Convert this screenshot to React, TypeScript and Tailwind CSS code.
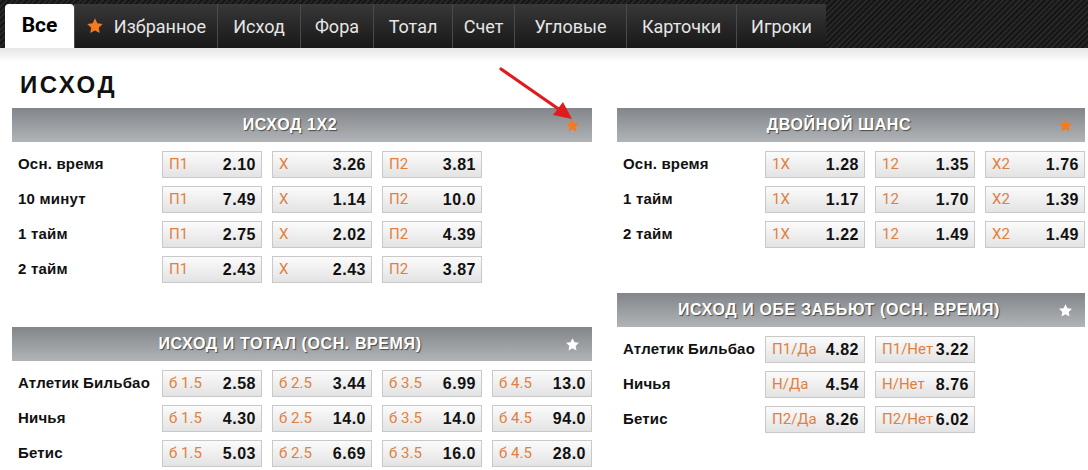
import type { ReactNode } from 'react';

type Odd = { label: string; value: string };
type Row = { name: string; odds: Odd[] };

const TABS: { title: string; width: string }[] = [
  { title: 'Исход', width: 'w-[83px]' },
  { title: 'Фора', width: 'w-[73px]' },
  { title: 'Тотал', width: 'w-[79px]' },
  { title: 'Счет', width: 'w-[62px]' },
  { title: 'Угловые', width: 'w-[112px]' },
  { title: 'Карточки', width: 'w-[110px]' },
  { title: 'Игроки', width: 'w-[90px]' }
];

const mk = (labels: string[], values: string[]): Odd[] =>
  labels.map((label, i) => ({ label, value: values[i] }));

const outcome: Row[] = [
  { name: 'Осн. время', odds: mk(['П1', 'Х', 'П2'], ['2.10', '3.26', '3.81']) },
  { name: '10 минут', odds: mk(['П1', 'Х', 'П2'], ['7.49', '1.14', '10.0']) },
  { name: '1 тайм', odds: mk(['П1', 'Х', 'П2'], ['2.75', '2.02', '4.39']) },
  { name: '2 тайм', odds: mk(['П1', 'Х', 'П2'], ['2.43', '2.43', '3.87']) }
];

const totals = ['б 1.5', 'б 2.5', 'б 3.5', 'б 4.5'];
const outcomeTotal: Row[] = [
  { name: 'Атлетик Бильбао', odds: mk(totals, ['2.58', '3.44', '6.99', '13.0']) },
  { name: 'Ничья', odds: mk(totals, ['4.30', '14.0', '14.0', '94.0']) },
  { name: 'Бетис', odds: mk(totals, ['5.03', '6.69', '16.0', '28.0']) }
];

const doubleChance: Row[] = [
  { name: 'Осн. время', odds: mk(['1X', '12', 'X2'], ['1.28', '1.35', '1.76']) },
  { name: '1 тайм', odds: mk(['1X', '12', 'X2'], ['1.17', '1.70', '1.39']) },
  { name: '2 тайм', odds: mk(['1X', '12', 'X2'], ['1.22', '1.49', '1.49']) }
];

const bothScore: Row[] = [
  { name: 'Атлетик Бильбао', odds: mk(['П1/Да', 'П1/Нет'], ['4.82', '3.22']) },
  { name: 'Ничья', odds: mk(['Н/Да', 'Н/Нет'], ['4.54', '8.76']) },
  { name: 'Бетис', odds: mk(['П2/Да', 'П2/Нет'], ['8.26', '6.02']) }
];

function Star({ className }: { className: string }) {
  return (
    <svg viewBox="0 0 24 24" className={className} fill="currentColor">
      <path d="M12 1.8l3.1 6.6 7.2.9-5.3 5 1.4 7.1L12 17.9l-6.4 3.5 1.4-7.1-5.3-5 7.2-.9z" />
    </svg>
  );
}

function SectionHeader({ title, starred }: { title: string; starred: boolean }) {
  return (
    <div className="relative h-[34px] flex items-center justify-center pr-[24px] bg-gradient-to-b from-[#82868a] to-[#b1b4b7]">
      <span className="text-white font-bold text-[16px] tracking-[0.6px] uppercase font-['Liberation_Sans',Arial,sans-serif] [text-shadow:1px_1px_1px_rgba(0,0,0,0.55)]">
        {title}
      </span>
      <Star
        className={`absolute right-[12px] top-[10px] w-[15px] h-[15px] ${
          starred ? 'text-[#f47a20]' : 'text-white'
        }`}
      />
    </div>
  );
}

function OddCell({ odd }: { odd: Odd }) {
  return (
    <div className="w-[100px] h-[27px] flex items-center justify-between px-[5px] whitespace-nowrap border border-[#c9c9c9] bg-gradient-to-b from-[#fbfbfb] to-[#e3e3e3]">
      <span className="text-[#e0803f] text-[15px] font-['Roboto',sans-serif] pl-[1px]">
        {odd.label}
      </span>
      <span className="text-[#111] font-bold text-[16px] tracking-[0.5px] font-['Liberation_Sans',Arial,sans-serif]">
        {odd.value}
      </span>
    </div>
  );
}

function Section({
  title,
  starred,
  rows,
  labelWidth,
  children
}: {
  title: string;
  starred: boolean;
  rows: Row[];
  labelWidth: string;
  children?: ReactNode;
}) {
  return (
    <div>
      <SectionHeader title={title} starred={starred} />
      <div className="pt-[5px]">
        {rows.map((row) => (
          <div key={row.name} className="h-[35px] flex items-center">
            <div
              className={`${labelWidth} pl-[6px] text-[#111] font-bold text-[15px] tracking-[0.2px] font-['Liberation_Sans',Arial,sans-serif]`}
            >
              {row.name}
            </div>
            <div className="flex gap-[10px]">
              {row.odds.map((odd, i) => (
                <OddCell key={i} odd={odd} />
              ))}
            </div>
          </div>
        ))}
      </div>
      {children}
    </div>
  );
}

function TopNav() {
  return (
    <div className="h-[48px] bg-[#1d1d1d] bg-[repeating-linear-gradient(135deg,#262626_0px,#262626_2px,#161616_2px,#161616_4px)] flex items-end px-[5px]">
      <div className="w-[69px] h-[44px] rounded-t-[4px] bg-white flex items-center justify-center text-black font-bold text-[21px] font-['Roboto',sans-serif]">
        Все
      </div>
      <div className="w-[143px] h-[44px] flex items-center justify-center gap-[10px] border-l border-[#4a4a4a] bg-gradient-to-b from-[#383838] to-[#181818] text-[#e6e6e6] text-[18px] font-['Roboto',sans-serif]">
        <Star className="w-[18px] h-[18px] text-[#f47a20]" />
        <span>Избранное</span>
      </div>
      {TABS.map((tab) => (
        <div
          key={tab.title}
          className={`${tab.width} h-[44px] flex items-center justify-center border-l border-[#4a4a4a] bg-gradient-to-b from-[#383838] to-[#181818] text-[#e6e6e6] text-[18px] font-['Roboto',sans-serif]`}
        >
          {tab.title}
        </div>
      ))}
    </div>
  );
}

export default function App() {
  return (
    <div className="relative w-[1088px] h-[470px] overflow-hidden bg-white">
      <TopNav />
      <div className="h-[14px] bg-gradient-to-b from-[#e6e6e6] to-white" />
      <div className="h-[46px] pl-[20px] pt-[9px]">
        <h1 className="text-[24px] leading-[28px] font-bold tracking-[2.5px] text-[#111] font-['Liberation_Sans',Arial,sans-serif]">
          ИСХОД
        </h1>
      </div>
      <div className="flex pl-[12px] gap-[25px]">
        <div className="w-[580px] flex flex-col gap-[40px]">
          <Section title="Исход 1X2" starred rows={outcome} labelWidth="w-[150px]" />
          <Section
            title="Исход и тотал (осн. время)"
            starred={false}
            rows={outcomeTotal}
            labelWidth="w-[150px]"
          />
        </div>
        <div className="w-[468px] flex flex-col gap-[41px]">
          <Section title="Двойной шанс" starred rows={doubleChance} labelWidth="w-[148px]" />
          <Section
            title="Исход и обе забьют (осн. время)"
            starred={false}
            rows={bothScore}
            labelWidth="w-[148px]"
          />
        </div>
      </div>
      <svg
        className="absolute left-[496px] top-[64px] w-[84px] h-[60px]"
        viewBox="0 0 84 60"
      >
        <line x1="5" y1="5" x2="64" y2="46" stroke="#e11b1b" strokeWidth="3.2" strokeLinecap="round" />
        <polygon points="76,55 57,51 67,38" fill="#e11b1b" />
      </svg>
    </div>
  );
}
